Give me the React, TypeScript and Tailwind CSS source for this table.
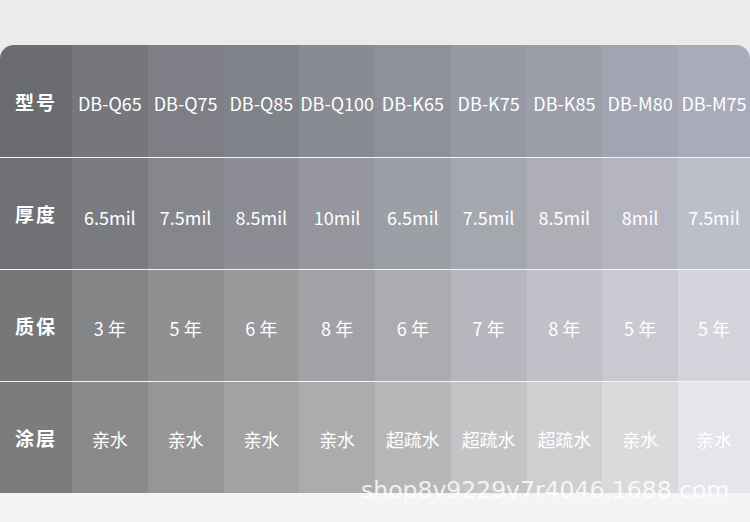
const models = ['DB-Q65', 'DB-Q75', 'DB-Q85', 'DB-Q100', 'DB-K65', 'DB-K75', 'DB-K85', 'DB-M80', 'DB-M75']
const thickness = ['6.5mil', '7.5mil', '8.5mil', '10mil', '6.5mil', '7.5mil', '8.5mil', '8mil', '7.5mil']
const warranty = ['3 年', '5 年', '6 年', '8 年', '6 年', '7 年', '8 年', '5 年', '5 年']
const coating = ['亲水', '亲水', '亲水', '亲水', '超疏水', '超疏水', '超疏水', '亲水', '亲水']

// colours sampled per cell: darker top-left, lighter bottom-right
const rows = [
  {
    label: '型号',
    values: models,
    pad: 'pt-[4px]',
    bg: ['bg-[#6b6c70]', 'bg-[#76777c]', 'bg-[#7d7e86]', 'bg-[#80838a]', 'bg-[#898b93]', 'bg-[#8e919a]', 'bg-[#979aa4]', 'bg-[#9c9eaa]', 'bg-[#a2a4b1]', 'bg-[#a9abbb]'],
  },
  {
    label: '厚度',
    values: thickness,
    pad: 'pt-[8px]',
    bg: ['bg-[#707174]', 'bg-[#7a7b7f]', 'bg-[#86878b]', 'bg-[#8c8d94]', 'bg-[#96979e]', 'bg-[#9c9fa5]', 'bg-[#a5a7af]', 'bg-[#adaeb6]', 'bg-[#b4b5c0]', 'bg-[#bcbec8]'],
  },
  {
    label: '质保',
    values: warranty,
    pad: 'pt-[6px]',
    bg: ['bg-[#767778]', 'bg-[#848587]', 'bg-[#8f8f92]', 'bg-[#99999c]', 'bg-[#a3a3a7]', 'bg-[#acacb0]', 'bg-[#b6b6be]', 'bg-[#c0c0c8]', 'bg-[#c9c9d1]', 'bg-[#d4d5dc]'],
  },
  {
    label: '涂层',
    values: coating,
    pad: 'pt-[3px]',
    bg: ['bg-[#7c7c7d]', 'bg-[#8a8a8b]', 'bg-[#969697]', 'bg-[#a2a2a3]', 'bg-[#acacae]', 'bg-[#b7b7b9]', 'bg-[#c4c4c7]', 'bg-[#cfcfd2]', 'bg-[#dadadd]', 'bg-[#e5e5ea]'],
  },
]

export default function App() {
  return (
    <div
      className="relative flex h-[522px] w-[750px] flex-col overflow-hidden bg-[#f4f4f4] text-white"
      style={{ fontFamily: '"Noto Sans CJK SC", "Noto Sans", sans-serif' }}
    >
      <div className="h-[45px] bg-[#ebebeb]" />
      <div className="bg-[#ebebeb]">
        <div className="overflow-hidden rounded-t-[14px]">
          {rows.map((row, r) => (
            <div
              key={row.label}
              className={`grid h-[112px] grid-cols-[72px_repeat(8,1fr)_72px] ${r > 0 ? 'border-t border-white/45' : ''}`}
            >
              <div className={`flex items-center justify-center pt-[2px] text-[19px] font-bold tracking-[2px] ${row.bg[0]}`}>
                {row.label}
              </div>
              {row.values.map((v, i) => (
                <div
                  key={i}
                  className={`flex items-center justify-center whitespace-nowrap text-[18px] ${row.pad} ${row.bg[i + 1]}`}
                >
                  {v}
                </div>
              ))}
            </div>
          ))}
        </div>
      </div>

      <div
        className="absolute left-[361px] top-[479px] whitespace-nowrap text-[23.5px] leading-none text-white/80"
        style={{ fontFamily: '"DejaVu Sans", sans-serif' }}
      >
        shop8v9229v7r4046.1688.com
      </div>
    </div>
  )
}
